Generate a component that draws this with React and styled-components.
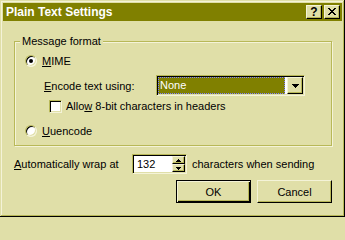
import React from "react";
import styled, { createGlobalStyle, css } from "styled-components";

const FACE = "#e0dfa8";
const LIGHT = "#f4f3d8";
const SHADOW = "#b8b858";
const DARK = "#000000";
const OLIVE = "#808000";

const GlobalStyle = createGlobalStyle`
  html, body {
    margin: 0;
    padding: 0;
    background: ${FACE};
  }
  body {
    font-family: "Liberation Sans", Arial, sans-serif;
    font-size: 11px;
    color: #000;
  }
`;

const raised = css`
  box-sizing: border-box;
  background: ${FACE};
  border: 1px solid;
  border-color: ${LIGHT} ${DARK} ${DARK} ${LIGHT};
  box-shadow: inset -1px -1px 0 ${SHADOW};
`;

const sunken = css`
  box-sizing: border-box;
  background: #fff;
  border: 1px solid;
  border-color: ${SHADOW} ${LIGHT} ${LIGHT} ${SHADOW};
  box-shadow: inset 1px 1px 0 ${DARK}, inset -1px -1px 0 ${FACE};
`;

const Window = styled.div`
  width: 345px;
  height: 217px;
  box-sizing: border-box;
  padding: 3px;
  background: ${FACE};
  display: flex;
  flex-direction: column;
  box-shadow: inset -1px -1px 0 ${DARK}, inset 1px 1px 0 ${FACE},
    inset -2px -2px 0 ${SHADOW}, inset 2px 2px 0 ${LIGHT};
`;

const TitleBar = styled.div`
  height: 18px;
  flex: none;
  background: ${OLIVE};
  display: flex;
  align-items: center;
  justify-content: space-between;
  padding: 0 2px 0 3px;
`;

const Title = styled.span`
  color: #fff;
  font-weight: bold;
  font-size: 12px;
  line-height: 18px;
  white-space: nowrap;
`;

const CaptionButtons = styled.div`
  display: flex;
  gap: 2px;
`;

const CaptionButton = styled.div`
  ${raised};
  width: 16px;
  height: 14px;
  display: flex;
  align-items: center;
  justify-content: center;
  font-weight: bold;
  font-size: 12px;
  line-height: 12px;
  padding-bottom: 1px;
`;

const Body = styled.div`
  display: flex;
  flex-direction: column;
  padding: 20px 10px 0 11px;
`;

const GroupBox = styled.div`
  height: 105px;
  box-sizing: border-box;
  border: 1px solid ${SHADOW};
  box-shadow: inset 1px 1px 0 ${LIGHT}, 1px 1px 0 ${LIGHT};
  display: flex;
  flex-direction: column;
  padding-left: 10px;
`;

const GroupLabel = styled.span`
  align-self: flex-start;
  margin: -7px 0 0 -5px;
  padding: 0 2px;
  line-height: 13px;
  background: ${FACE};
`;

const Row = styled.div`
  display: flex;
  align-items: center;
  height: ${(p) => p.$h || 16}px;
  margin-top: ${(p) => p.$top || 0}px;
  padding-left: ${(p) => p.$indent || 0}px;
  gap: ${(p) => p.$gap ?? 5}px;
  white-space: nowrap;
`;

const Key = styled.span`
  text-decoration: underline;
  text-underline-offset: 1px;
`;

const Radio = styled.span`
  position: relative;
  width: 12px;
  height: 12px;
  flex: none;
  box-sizing: border-box;
  border-radius: 50%;
  background: #fff;
  border: 1px solid;
  border-color: ${SHADOW} ${LIGHT} ${LIGHT} ${SHADOW};
  box-shadow: inset 1px 1px 0 ${DARK}, inset -1px -1px 0 ${FACE};

  &::after {
    content: "";
    display: ${(p) => (p.$checked ? "block" : "none")};
    position: absolute;
    left: 3px;
    top: 3px;
    width: 4px;
    height: 4px;
    border-radius: 50%;
    background: #000;
  }
`;

const CheckBox = styled.span`
  ${sunken};
  width: 13px;
  height: 13px;
  flex: none;
`;

const FieldLabel = styled.span`
  width: ${(p) => p.$w}px;
  flex: none;
`;

const Combo = styled.div`
  ${sunken};
  width: 149px;
  height: 21px;
  padding: 1px;
  display: flex;
  gap: 2px;
`;

const Selection = styled.div`
  flex: 1;
  background: ${OLIVE};
  color: #fff;
  outline: 1px dotted #8080ff;
  outline-offset: -1px;
  line-height: 17px;
  padding-left: 2px;
`;

const DropButton = styled.div`
  ${raised};
  width: 16px;
  display: flex;
  align-items: center;
  justify-content: center;
`;

const SpinBox = styled.div`
  ${sunken};
  width: 55px;
  height: 20px;
  padding: 1px;
  display: flex;
`;

const SpinValue = styled.div`
  flex: 1;
  line-height: 16px;
  padding-left: 3px;
`;

const SpinButtons = styled.div`
  width: 13px;
  display: flex;
  flex-direction: column;
`;

const SpinButton = styled.div`
  ${raised};
  flex: 1;
  display: flex;
  align-items: center;
  justify-content: center;
`;

const TrailingText = styled.span`
  margin-left: 5px;
`;

const ButtonRow = styled.div`
  display: flex;
  justify-content: flex-end;
  gap: 6px;
  margin-top: 6px;
`;

const Button = styled.div`
  width: 75px;
  height: 23px;
  box-sizing: border-box;
  display: flex;
  align-items: center;
  justify-content: center;
  background: ${FACE};
  ${(p) =>
    p.$default
      ? css`
          border: 1px solid ${DARK};
          box-shadow: inset 1px 1px 0 ${LIGHT}, inset -1px -1px 0 ${DARK},
            inset -2px -2px 0 ${SHADOW};
        `
      : css`
          border: 1px solid;
          border-color: ${LIGHT} ${DARK} ${DARK} ${LIGHT};
          box-shadow: inset -1px -1px 0 ${SHADOW};
        `}
`;

const CloseGlyph = () => (
  <svg width="8" height="7" viewBox="0 0 8 7" shapeRendering="crispEdges">
    <path
      fill="#000"
      d="M0 0h2v1H0zM6 0h2v1H6zM1 1h2v1H1zM5 1h2v1H5zM2 2h4v1H2zM3 3h2v1H3zM2 4h4v1H2zM1 5h2v1H1zM5 5h2v1H5zM0 6h2v1H0zM6 6h2v1H6z"
    />
  </svg>
);

const Arrow = ({ up, size = 7 }) => {
  const rows = [];
  const n = Math.ceil(size / 2);
  for (let i = 0; i < n; i++) {
    const y = up ? n - 1 - i : i;
    rows.push(<rect key={i} x={i} y={y} width={size - 2 * i} height={1} />);
  }
  return (
    <svg width={size} height={n} viewBox={`0 0 ${size} ${n}`} shapeRendering="crispEdges">
      <g fill="#000">{rows}</g>
    </svg>
  );
};

export default function App() {
  return (
    <>
      <GlobalStyle />
      <Window>
        <TitleBar>
          <Title>Plain Text Settings</Title>
          <CaptionButtons>
            <CaptionButton>?</CaptionButton>
            <CaptionButton>
              <CloseGlyph />
            </CaptionButton>
          </CaptionButtons>
        </TitleBar>
        <Body>
          <GroupBox>
            <GroupLabel>Message format</GroupLabel>
            <Row $top={5}>
              <Radio $checked />
              <span>
                <Key>M</Key>IME
              </span>
            </Row>
            <Row $top={6} $h={21} $indent={19} $gap={0}>
              <FieldLabel $w={112}>
                <Key>E</Key>ncode text using:
              </FieldLabel>
              <Combo>
                <Selection>None</Selection>
                <DropButton>
                  <Arrow />
                </DropButton>
              </Combo>
            </Row>
            <Row $top={2} $indent={24} $gap={4}>
              <CheckBox />
              <span>
                Allo<Key>w</Key> 8-bit characters in headers
              </span>
            </Row>
            <Row $top={9}>
              <Radio />
              <span>
                <Key>U</Key>uencode
              </span>
            </Row>
          </GroupBox>
          <Row $top={8} $h={20} $gap={0}>
            <FieldLabel $w={118}>
              <Key>A</Key>utomatically wrap at
            </FieldLabel>
            <SpinBox>
              <SpinValue>132</SpinValue>
              <SpinButtons>
                <SpinButton>
                  <Arrow up size={5} />
                </SpinButton>
                <SpinButton>
                  <Arrow size={5} />
                </SpinButton>
              </SpinButtons>
            </SpinBox>
            <TrailingText>characters when sending</TrailingText>
          </Row>
          <ButtonRow>
            <Button $default>OK</Button>
            <Button>Cancel</Button>
          </ButtonRow>
        </Body>
      </Window>
    </>
  );
}
